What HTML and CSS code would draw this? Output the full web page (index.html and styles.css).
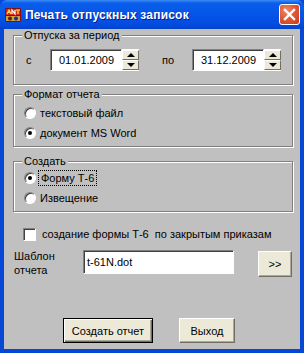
FILE: index.html
```html
<!DOCTYPE html>
<html lang="ru">
<head>
    <meta charset="UTF-8">
    <title>Печать отпускных записок</title>
    <link rel="stylesheet" href="styles.css">
</head>
<body>
    <div class="window">
        <div class="titlebar">
            <svg class="app-icon" width="16" height="16" viewBox="0 0 16 16">
                <rect x="0" y="1" width="16" height="14" rx="1" fill="#7a1010"/>
                <rect x="1" y="2" width="14" height="6" fill="#d8281c"/>
                <path d="M2 7 L4 3 L6 7 M3 5.5 H5" stroke="#ffd84a" stroke-width="1.2" fill="none"/>
                <path d="M7 7 V3 L10 7 V3" stroke="#ffffff" stroke-width="1.2" fill="none"/>
                <path d="M11 3 H15 M13 3 V7" stroke="#ffd84a" stroke-width="1.2" fill="none"/>
                <rect x="1" y="9" width="14" height="5" fill="#c9a23a"/>
                <circle cx="5" cy="11.5" r="2" fill="#7a1010"/>
                <circle cx="11" cy="11.5" r="2" fill="#2a2a8a"/>
            </svg>
            <span class="title">Печать отпускных записок</span>
            <div class="close-btn">
                <svg width="13" height="13" viewBox="0 0 13 13">
                    <path d="M2 2 L11 11 M11 2 L2 11" stroke="#fff" stroke-width="2.4" stroke-linecap="square"/>
                </svg>
            </div>
        </div>

        <div class="client">
            <fieldset class="group group-period">
                <legend>Отпуска за период</legend>
                <div class="period-row">
                    <span class="lbl-from">с</span>
                    <div class="date">
                        <div class="date-text">01.01.2009</div>
                        <div class="spin">
                            <span class="spin-btn"><i class="arrow-up"></i></span>
                            <span class="spin-btn"><i class="arrow-down"></i></span>
                        </div>
                    </div>
                    <span class="lbl-to">по</span>
                    <div class="date">
                        <div class="date-text">31.12.2009</div>
                        <div class="spin">
                            <span class="spin-btn"><i class="arrow-up"></i></span>
                            <span class="spin-btn"><i class="arrow-down"></i></span>
                        </div>
                    </div>
                </div>
            </fieldset>

            <fieldset class="group group-format">
                <legend>Формат отчета</legend>
                <div class="option"><span class="radio"></span><span>текстовый файл</span></div>
                <div class="option"><span class="radio checked"></span><span>документ MS Word</span></div>
            </fieldset>

            <fieldset class="group group-create">
                <legend>Создать</legend>
                <div class="option"><span class="radio checked"></span><span class="focused">Форму Т-6</span></div>
                <div class="option"><span class="radio"></span><span>Извещение</span></div>
            </fieldset>

            <div class="check-row">
                <span class="checkbox"></span>
                <span>создание формы Т-6&nbsp; по закрытым приказам</span>
            </div>

            <div class="template-row">
                <div class="template-label">Шаблон<br>отчета</div>
                <div class="template-input">t-61N.dot</div>
                <div class="btn btn-browse">&gt;&gt;</div>
            </div>

            <div class="actions">
                <div class="btn btn-default">Создать отчет</div>
                <div class="btn btn-exit">Выход</div>
            </div>
        </div>
    </div>
</body>
</html>
```

FILE: styles.css
```css
body {
    margin: 0;
    font-family: "Liberation Sans", Arial, sans-serif;
    font-size: 11px;
    color: #000;
    background-color: #c0c0c0;
}
.window {
    width: 304px;
    height: 353px;
    display: flex;
    flex-direction: column;
    background-color: #0846d6;
}
.titlebar {
    height: 29px;
    display: flex;
    align-items: center;
    padding: 0 4px 0 5px;
    background: linear-gradient(#3d8cf6 0, #0a5eea 3px, #0556e8 45%, #034cdf 85%, #0242c9 100%);
    border-radius: 7px 7px 0 0;
}
.app-icon {
    flex: none;
}
.title {
    margin-left: 4px;
    color: #fff;
    font-weight: bold;
    font-size: 12px;
    letter-spacing: 0.2px;
    text-shadow: 1px 1px 0 #0a1e8c;
    flex: 1;
}
.close-btn {
    width: 19px;
    height: 19px;
    border: 1px solid #fff;
    border-radius: 3px;
    background: radial-gradient(circle at 35% 30%, #f08a68 0, #e25a34 45%, #c8391a 100%);
    display: flex;
    align-items: center;
    justify-content: center;
}
.client {
    flex: 1;
    margin: 0 4px 4px 4px;
    background-color: #c0c0c0;
    padding: 0 7px 0 9px;
    display: flex;
    flex-direction: column;
}
.group {
    margin: 0;
    padding: 0;
    border: 1px solid #808080;
    box-shadow: inset 1px 1px 0 #fff, 1px 1px 0 #fff;
}
.group legend {
    margin-left: 8px;
    padding: 0 2px;
    line-height: 12px;
    background-color: #c0c0c0;
    position: relative;
}
.group-period {
    padding: 8px 0 13px 0;
}
.group-format {
    margin-top: 3px;
    padding: 3px 0 3px 0;
}
.group-create {
    margin-top: 8px;
    padding: 1px 0 3px 0;
}
.period-row {
    display: flex;
    align-items: center;
    height: 22px;
    padding-left: 12px;
}
.lbl-from {
    width: 24px;
}
.lbl-to {
    width: 30px;
    margin-left: 23px;
}
.date {
    display: flex;
    height: 22px;
}
.date-text {
    width: 62px;
    padding-left: 8px;
    background-color: #fff;
    border: 1px solid;
    border-color: #808080 #fff #fff #808080;
    box-shadow: inset 1px 1px 0 #404040;
    display: flex;
    align-items: center;
    font-size: 11px;
}
.spin {
    width: 17px;
    display: flex;
    flex-direction: column;
    background-color: #fff;
    padding: 1px 0;
}
.spin-btn {
    flex: 1;
    background-color: #ece9d8;
    border: 1px solid;
    border-color: #fff #716f64 #716f64 #fff;
    display: flex;
    align-items: center;
    justify-content: center;
}
.arrow-up, .arrow-down {
    width: 0;
    height: 0;
    border-left: 4px solid transparent;
    border-right: 4px solid transparent;
}
.arrow-up {
    border-bottom: 4px solid #000;
}
.arrow-down {
    border-top: 4px solid #000;
}
.option {
    display: flex;
    align-items: center;
    height: 20px;
    padding-left: 10px;
}
.radio {
    width: 10px;
    height: 10px;
    margin-right: 4px;
    border: 1px solid #808080;
    border-right-color: #fff;
    border-bottom-color: #fff;
    border-radius: 50%;
    background-color: #fff;
    box-shadow: inset 1px 1px 0 #404040;
    display: flex;
    align-items: center;
    justify-content: center;
}
.radio.checked::after {
    content: "";
    width: 4px;
    height: 4px;
    border-radius: 50%;
    background-color: #000;
}
.focused {
    outline: 1px dotted #000;
    outline-offset: 1px;
    padding: 0 1px;
}
.check-row {
    margin-top: 12px;
    height: 20px;
    display: flex;
    align-items: center;
    padding-left: 10px;
}
.checkbox {
    width: 11px;
    height: 11px;
    margin-right: 6px;
    background-color: #fff;
    border: 1px solid;
    border-color: #808080 #fff #fff #808080;
    box-shadow: inset 1px 1px 0 #404040;
}
.template-row {
    margin-top: 5px;
    height: 28px;
    display: flex;
    align-items: flex-start;
}
.template-label {
    width: 69px;
    margin-left: 1px;
    line-height: 14px;
}
.template-input {
    width: 146px;
    height: 22px;
    margin-top: 1px;
    padding-left: 3px;
    background-color: #fff;
    border: 1px solid;
    border-color: #808080 #fff #fff #808080;
    box-shadow: inset 1px 1px 0 #404040;
    display: flex;
    align-items: center;
}
.btn {
    box-sizing: border-box;
    background-color: #ece9d8;
    border: 1px solid;
    border-color: #fff #716f64 #716f64 #fff;
    box-shadow: inset -1px -1px 0 #aca899;
    display: flex;
    align-items: center;
    justify-content: center;
}
.btn-browse {
    width: 34px;
    height: 26px;
    margin-top: 2px;
    margin-left: 24px;
}
.actions {
    margin-top: 41px;
    display: flex;
    padding-left: 50px;
}
.btn-default {
    width: 90px;
    height: 25px;
    border: 1px solid #000;
    box-shadow: inset 1px 1px 0 #fff, inset -1px -1px 0 #716f64, inset -2px -2px 0 #aca899;
}
.btn-exit {
    width: 56px;
    height: 25px;
    margin-left: 26px;
}
```
